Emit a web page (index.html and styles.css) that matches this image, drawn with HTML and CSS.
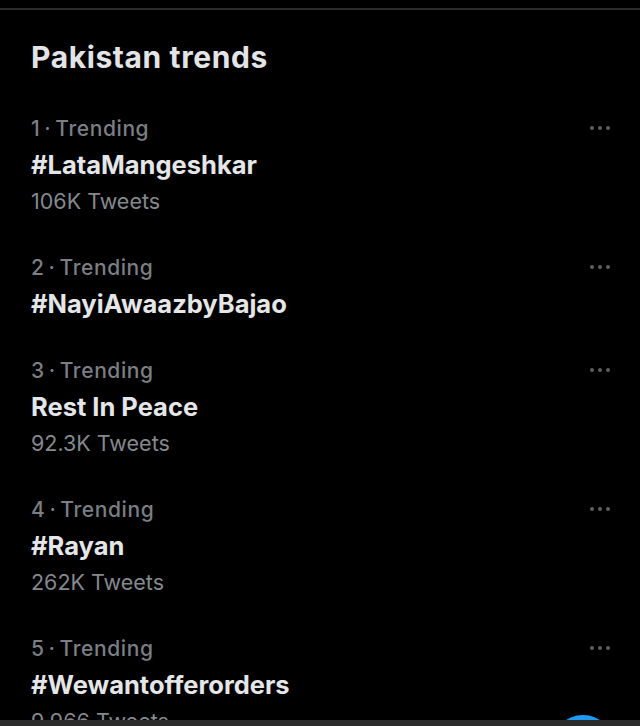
FILE: index.html
```html
<!DOCTYPE html>
<html lang="en">
<head>
    <meta charset="UTF-8">
    <meta name="viewport" content="width=device-width, initial-scale=1.0">
    <title>Pakistan trends</title>
    <link rel="stylesheet" href="styles.css">
</head>
<body>
    <div class="topline"></div>

    <h2 class="title">Pakistan trends</h2>

    <ul class="trends">
        <li class="trend">
            <div class="meta">1<span class="sep">·</span>Trending</div>
            <div class="name">#LataMangeshkar</div>
            <div class="count">106K Tweets</div>
            <span class="more"><i></i><i></i><i></i></span>
        </li>
        <li class="trend">
            <div class="meta">2<span class="sep">·</span>Trending</div>
            <div class="name">#NayiAwaazbyBajao</div>
            <span class="more"><i></i><i></i><i></i></span>
        </li>
        <li class="trend">
            <div class="meta">3<span class="sep">·</span>Trending</div>
            <div class="name">Rest In Peace</div>
            <div class="count">92.3K Tweets</div>
            <span class="more"><i></i><i></i><i></i></span>
        </li>
        <li class="trend">
            <div class="meta">4<span class="sep">·</span>Trending</div>
            <div class="name">#Rayan</div>
            <div class="count">262K Tweets</div>
            <span class="more"><i></i><i></i><i></i></span>
        </li>
        <li class="trend">
            <div class="meta">5<span class="sep">·</span>Trending</div>
            <div class="name">#Wewantofferorders</div>
            <div class="count">9,966 Tweets</div>
            <span class="more"><i></i><i></i><i></i></span>
        </li>
    </ul>

    <div class="fab"></div>
    <div class="navbar"></div>
</body>
</html>
```

FILE: styles.css
```css
body {
    margin: 0;
    height: 726px;
    overflow: hidden;
    background: #000;
    color: #e4e6e7;
    font-family: Inter, "Liberation Sans", sans-serif;
}
.topline {
    margin-top: 8px;
    height: 2px;
    background: #2a2a2a;
}
.title {
    margin: 29px 0 0;
    padding-left: 31px;
    font-size: 30px;
    line-height: 36px;
    font-weight: 700;
    letter-spacing: 0.6px;
    color: #e2e4e5;
}
.trends {
    list-style: none;
    margin: 36px 0 0;
    padding: 0 30px 0 31px;
}
.trend {
    position: relative;
    margin-bottom: 31px;
}
.meta {
    font-size: 21px;
    line-height: 36px;
    font-weight: 500;
    letter-spacing: 0.6px;
    color: #7b7f83;
}
.sep {
    margin: 0 4px;
}
.name {
    font-size: 25.5px;
    line-height: 36px;
    font-weight: 700;
    color: #e4e6e7;
}
.count {
    font-size: 21.5px;
    line-height: 36px;
    color: #85898d;
}

/* overflow dots on the right */
.more {
    position: absolute;
    top: 15px;
    right: 0;
    display: flex;
    gap: 4px;
}
.more i {
    width: 4px;
    height: 4px;
    border-radius: 50%;
    background: #5c5e60;
}

.fab {
    position: fixed;
    left: 551px;
    top: 715px;
    width: 64px;
    height: 64px;
    border-radius: 50%;
    background: #1d9bf0;
}
.navbar {
    position: fixed;
    left: 0;
    right: 0;
    bottom: 0;
    height: 6px;
    background: #2b2b2b;
    z-index: 2;
}
```
